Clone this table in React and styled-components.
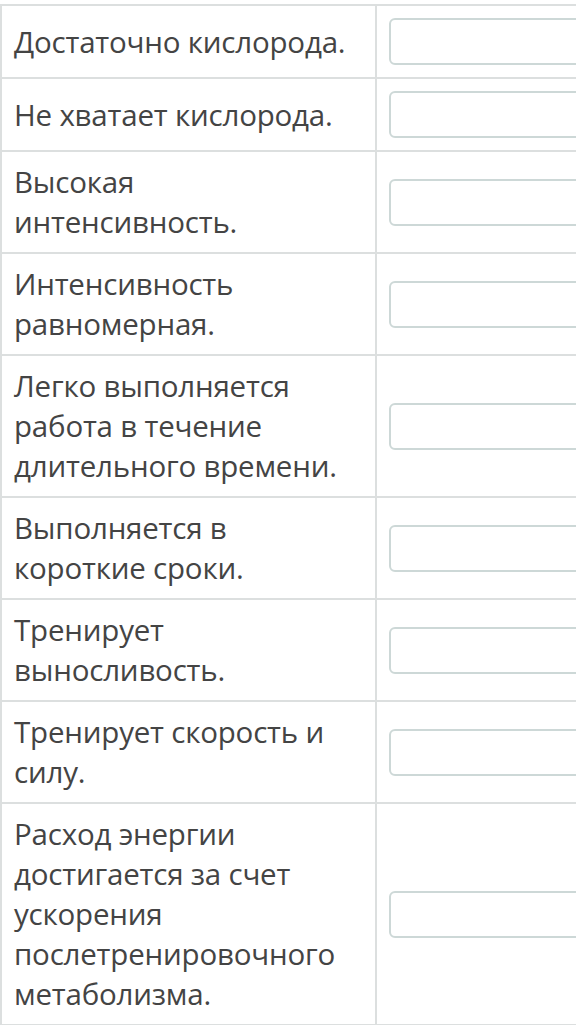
import React from "react";
import styled, { createGlobalStyle } from "styled-components";

const Global = createGlobalStyle`
  html, body {
    margin: 0;
    padding: 0;
    background: #fff;
  }
  body {
    font-family: "Open Sans", "Noto Sans", sans-serif;
  }
`

const Table = styled.div`
  margin-top: 4px;
  width: 576px;
  overflow: hidden;
  border-top: 2px solid #dcdfdf;
  border-left: 2px solid #dcdfdf;
`

const Row = styled.div`
  display: flex;
  border-bottom: 2px solid #dcdfdf;
`

const Label = styled.div`
  width: 349px;
  flex-shrink: 0;
  display: flex;
  flex-direction: column;
  justify-content: center;
  padding: 10px 12px;
  border-right: 2px solid #dcdfdf;
  font-size: 29.5px;
  line-height: 40px;
  letter-spacing: -0.2px;
  color: #444;
  white-space: nowrap;
`

const AnswerCell = styled.div`
  flex: 1;
  min-width: 0;
  display: flex;
  align-items: center;
  overflow: hidden;
  padding: 12px 0 12px 12px;
`

const Input = styled.div`
  flex-shrink: 0;
  width: calc(100% + 20px);
  height: 43px;
  border: 2px solid #cdd8d7;
  border-radius: 6px;
  background: #fff;
`

const items = [
  "Достаточно кислорода.",
  "Не хватает кислорода.",
  "Высокая<br>интенсивность.",
  "Интенсивность<br>равномерная.",
  "Легко выполняется<br>работа в течение<br>длительного времени.",
  "Выполняется в<br>короткие сроки.",
  "Тренирует<br>выносливость.",
  "Тренирует скорость и<br>силу.",
  "Расход энергии<br>достигается за счет<br>ускорения<br>послетренировочного<br>метаболизма.",
]

export default function App() {
  return (
    <>
      <Global />
      <Table>
        {items.map((text, i) => (
          <Row key={i}>
            <Label>
              {text.split("<br>").map((line, j) => (
                <div key={j}>{line}</div>
              ))}
            </Label>
            <AnswerCell>
              <Input />
            </AnswerCell>
          </Row>
        ))}
      </Table>
    </>
  );
}
